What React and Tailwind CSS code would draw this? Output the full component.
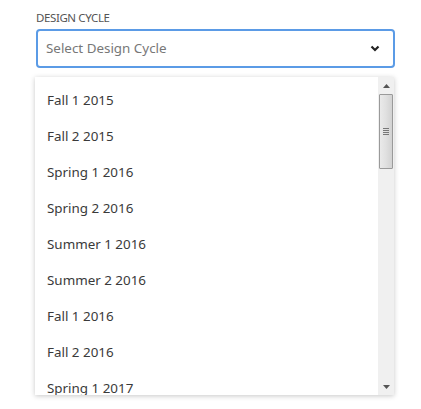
const cycles = [
  "Fall 1 2015",
  "Fall 2 2015",
  "Spring 1 2016",
  "Spring 2 2016",
  "Summer 1 2016",
  "Summer 2 2016",
  "Fall 1 2016",
  "Fall 2 2016",
  "Spring 1 2017",
];

export default function App() {
  return (
    <div className="h-[409px] w-[421px] bg-white pl-[36px] pt-[11px] font-['Noto_Sans',sans-serif]">
      <label className="block h-[18px] text-[11.5px] leading-[14px] tracking-[-0.4px] text-[#555]">
        DESIGN CYCLE
      </label>

      <div className="flex h-[39px] w-[359px] items-center justify-between rounded-[4px] border-2 border-[#5b9be6] pl-[8px] pr-[13px]">
        <span className="text-[13.4px] text-[#777]">Select Design Cycle</span>
        <svg width="10" height="7" viewBox="0 0 10 7">
          <path d="M1.5 1.5 L5 5 L8.5 1.5" fill="none" stroke="#222" strokeWidth="2.2" />
        </svg>
      </div>

      <div className="relative mt-[9px] ml-[-1px] flex h-[318px] w-[359px] overflow-hidden bg-white shadow-[0_1px_5px_rgba(0,0,0,0.22)]">
        <ul className="flex-1 pt-[5px]">
          {cycles.map((c) => (
            <li
              key={c}
              className="flex h-[36px] items-center pl-[12px] text-[13.4px] text-[#3a3a3a]"
            >
              {c}
            </li>
          ))}
        </ul>

        <div className="flex w-[16px] flex-col items-center bg-[#f0f0f0]">
          <div className="flex h-[17px] items-center justify-center">
            <svg width="7" height="4" viewBox="0 0 7 4">
              <path d="M0 4 L3.5 0 L7 4 Z" fill="#555" />
            </svg>
          </div>
          <div className="flex h-[75px] w-[14px] items-center justify-center rounded-[1px] border border-[#9a9a9a] bg-gradient-to-r from-[#eaeaea] via-[#e0e0e0] to-[#d2d2d2]">
            <div className="flex flex-col gap-[1px]">
              <div className="h-px w-[6px] bg-[#777]" />
              <div className="h-px w-[6px] bg-[#777]" />
              <div className="h-px w-[6px] bg-[#777]" />
              <div className="h-px w-[6px] bg-[#777]" />
            </div>
          </div>
          <div className="flex-1" />
          <div className="flex h-[17px] items-center justify-center">
            <svg width="7" height="4" viewBox="0 0 7 4">
              <path d="M0 0 L3.5 4 L7 0 Z" fill="#555" />
            </svg>
          </div>
        </div>
      </div>
    </div>
  );
}
